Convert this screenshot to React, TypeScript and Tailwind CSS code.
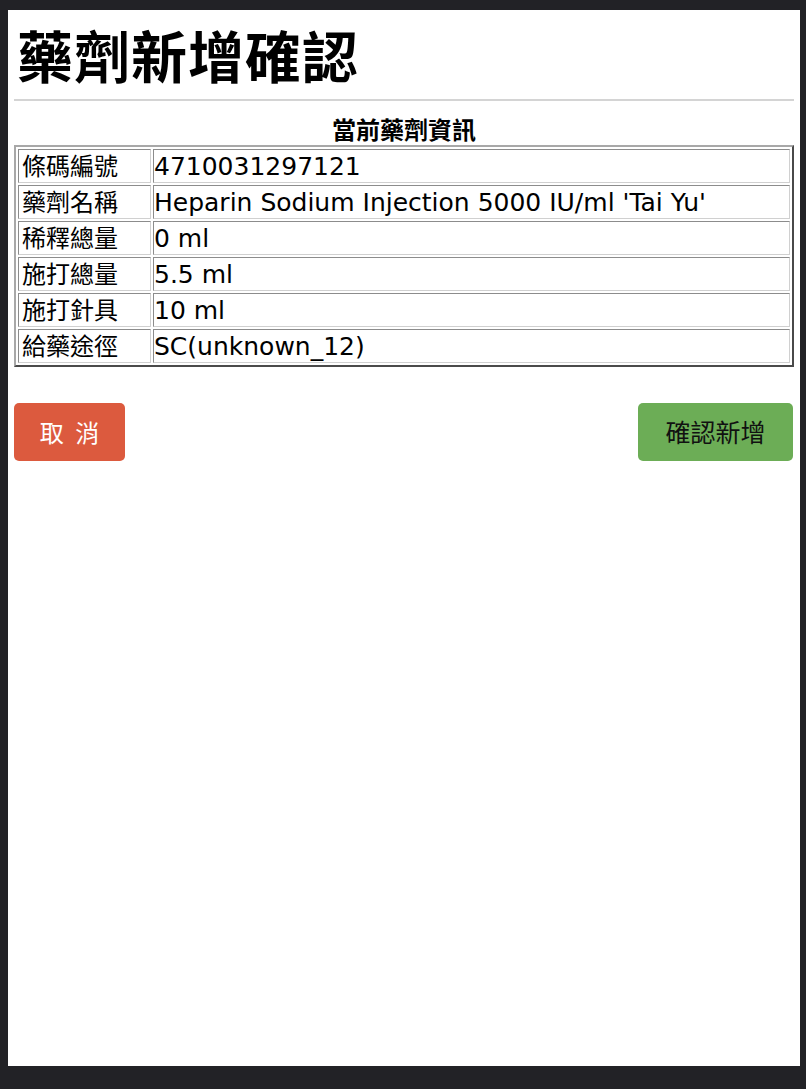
const rows: [string, string][] = [
  ['條碼編號', '4710031297121'],
  ['藥劑名稱', "Heparin Sodium Injection 5000 IU/ml 'Tai Yu'"],
  ['稀釋總量', '0 ml'],
  ['施打總量', '5.5 ml'],
  ['施打針具', '10 ml'],
  ['給藥途徑', 'SC(unknown_12)'],
]

export default function App() {
  return (
    <div className="min-h-[1089px] bg-[#222226] pt-[10px] pl-[8px] pr-[6px] pb-[23px] flex">
      <div className="flex-1 bg-white px-[6px] pt-[12px] min-h-[1056px] font-['Noto_Sans_CJK_TC',sans-serif]">
        {/* Title */}
        <h1 className="text-[56px] leading-[64px] font-bold text-black pl-[3px] tracking-[1px]">藥劑新增確認</h1>
        <hr className="mt-[13px] border-0 border-t-2 border-[#d4d4d4]" />

        {/* Current drug info */}
        <table className="mt-[14px] w-full border-separate border-spacing-[2px] border-2 border-t-[#a8a8a8] border-l-[#a8a8a8] border-r-[#4a4a4a] border-b-[#4a4a4a] font-['DejaVu_Sans','Noto_Sans_CJK_TC',sans-serif] text-[25px] text-black">
          <caption className="text-[24px] leading-[28px] font-bold font-['Noto_Sans_CJK_TC',sans-serif] pb-[2px]">
            當前藥劑資訊
          </caption>
          <tbody>
            {rows.map(([label, value]) => (
              <tr key={label}>
                <td className="w-[133px] h-[34px] pl-[3px] pr-0 pt-0 pb-[3px] leading-[28px] border border-t-[#8c8c8c] border-l-[#8c8c8c] border-r-[#d0d0d0] border-b-[#d0d0d0] font-['Noto_Sans_CJK_TC',sans-serif] text-[24px] whitespace-nowrap">
                  {label}
                </td>
                <td className="h-[34px] pl-0 pr-px pt-[2px] pb-0 leading-[28px] border border-t-[#8c8c8c] border-l-[#8c8c8c] border-r-[#d0d0d0] border-b-[#d0d0d0] whitespace-nowrap">
                  {value}
                </td>
              </tr>
            ))}
          </tbody>
        </table>

        {/* Actions */}
        <div className="mt-[36px] flex justify-between items-center pr-px">
          <button className="w-[111px] h-[58px] rounded-[5px] bg-[#dc5a3e] text-white text-[24px] tracking-[3px] font-normal pl-[3px]">
            取 消
          </button>
          <button className="w-[155px] h-[58px] rounded-[5px] bg-[#6cad56] text-[#111] text-[25px] font-normal">
            確認新增
          </button>
        </div>
      </div>
    </div>
  )
}
